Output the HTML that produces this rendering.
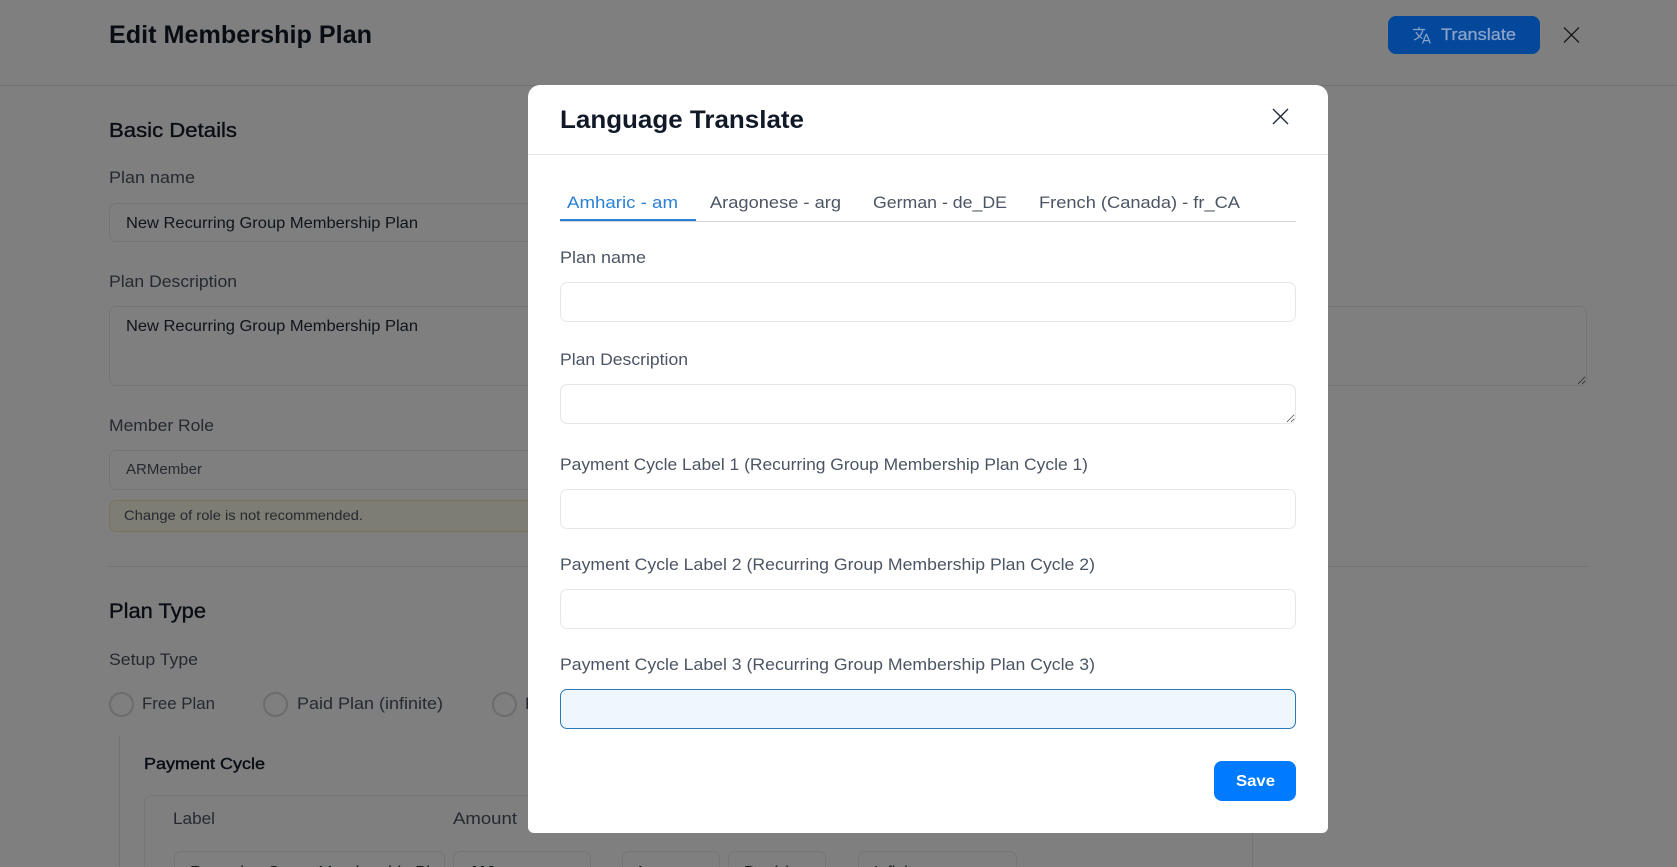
<!DOCTYPE html>
<html lang="en">
<head>
<meta charset="utf-8">
<title>Edit Membership Plan</title>
<style>
html,body{margin:0;padding:0;width:1677px;height:867px;overflow:hidden;background:#fff;font-family:"Liberation Sans",sans-serif}
#page{position:relative;width:1677px;height:867px;overflow:hidden;contain:paint}
.abs,.box,textarea,input{position:absolute;box-sizing:border-box}
.box{border:1px solid #ebebeb;border-radius:7px;background:#fff}
textarea,input{border:1px solid #e5e7eb;border-radius:7px;background:#fff;outline:none;margin:0;padding:0;display:block}
textarea{resize:both}
svg.layer{position:absolute;left:0;top:0;width:1677px;height:867px;pointer-events:none;overflow:hidden}
svg text{font-family:"Liberation Sans",sans-serif}
.radio{position:absolute;box-sizing:border-box;width:25px;height:25px;border:2px solid #d8d8d8;border-radius:50%;background:#fff;top:692px}
#overlay{position:absolute;left:0;top:0;width:1677px;height:867px;background:rgba(0,0,0,.5)}
#modal{position:absolute;left:528px;top:85px;width:800px;height:748px;background:#fff;border-radius:12px 12px 6px 6px}
.btn{position:absolute;border-radius:8px}
.cut{position:absolute;box-sizing:border-box;top:851px;height:16px;border:1px solid #ebebeb;border-bottom:0;border-radius:7px 7px 0 0}
</style>
</head>
<body>
<div id="page">

<!-- underlying page -->
<div class="abs" style="left:0;top:85px;width:1677px;height:1px;background:#e5e7eb"></div>
<div class="box" style="left:109px;top:203px;width:800px;height:39px"></div>
<textarea style="left:109px;top:306px;width:1478px;height:80px;border-color:#ebebeb"></textarea>
<div class="box" style="left:109px;top:450px;width:800px;height:40px"></div>
<div class="box" style="left:109px;top:500px;width:800px;height:32px;background:#fdfbe6;border-color:#f3e8c0"></div>
<div class="abs" style="left:109px;top:566px;width:1478px;height:1px;background:#e5e7eb"></div>
<div class="radio" style="left:109px"></div>
<div class="radio" style="left:263px"></div>
<div class="radio" style="left:492px"></div>
<div class="abs" style="left:119px;top:735px;width:1px;height:132px;background:#e5e7eb"></div>
<div class="abs" style="left:144px;top:795px;width:1109px;height:72px;box-sizing:border-box;border:1px solid #ebebeb;border-bottom:0;border-radius:8px 8px 0 0"></div>
<div class="cut" style="left:174px;width:271px"></div>
<div class="cut" style="left:453px;width:138px"></div>
<div class="cut" style="left:622px;width:98px"></div>
<div class="cut" style="left:728px;width:98px"></div>
<div class="cut" style="left:858px;width:159px"></div>

<svg class="layer" viewBox="0 0 1677 867">
  <text x="109" y="43" font-size="25" font-weight="700" fill="#111827" textLength="263" lengthAdjust="spacingAndGlyphs">Edit Membership Plan</text>
  <text x="109" y="137" font-size="20" fill="#111827" stroke="#111827" stroke-width=".35" textLength="128" lengthAdjust="spacingAndGlyphs">Basic Details</text>
  <text x="109" y="183" font-size="17" fill="#4b5563" textLength="86" lengthAdjust="spacingAndGlyphs">Plan name</text>
  <text x="126" y="228" font-size="16" fill="#1f2937" textLength="292" lengthAdjust="spacingAndGlyphs">New Recurring Group Membership Plan</text>
  <text x="109" y="287" font-size="17" fill="#4b5563" textLength="128" lengthAdjust="spacingAndGlyphs">Plan Description</text>
  <text x="126" y="331" font-size="16" fill="#1f2937" textLength="292" lengthAdjust="spacingAndGlyphs">New Recurring Group Membership Plan</text>
  <text x="109" y="431" font-size="17" fill="#4b5563" textLength="105" lengthAdjust="spacingAndGlyphs">Member Role</text>
  <text x="126" y="474" font-size="15" fill="#4b5563" textLength="76" lengthAdjust="spacingAndGlyphs">ARMember</text>
  <text x="124" y="520" font-size="14" fill="#4b5563" textLength="239" lengthAdjust="spacingAndGlyphs">Change of role is not recommended.</text>
  <text x="109" y="618" font-size="21" fill="#111827" stroke="#111827" stroke-width=".35" textLength="97" lengthAdjust="spacingAndGlyphs">Plan Type</text>
  <text x="109" y="665" font-size="17" fill="#4b5563" textLength="89" lengthAdjust="spacingAndGlyphs">Setup Type</text>
  <text x="142" y="709" font-size="17" fill="#4b5563" textLength="73" lengthAdjust="spacingAndGlyphs">Free Plan</text>
  <text x="297" y="709" font-size="17" fill="#4b5563" textLength="146" lengthAdjust="spacingAndGlyphs">Paid Plan (infinite)</text>
  <text x="525" y="709" font-size="17" fill="#4b5563">P</text>
  <text x="144" y="769" font-size="16" fill="#111827" stroke="#111827" stroke-width=".4" textLength="121" lengthAdjust="spacingAndGlyphs">Payment Cycle</text>
  <text x="173" y="824" font-size="17" fill="#4b5563" textLength="42" lengthAdjust="spacingAndGlyphs">Label</text>
  <text x="453" y="824" font-size="17" fill="#4b5563" textLength="64" lengthAdjust="spacingAndGlyphs">Amount</text>
  <text x="190" y="877" font-size="16" fill="#1f2937" textLength="240" lengthAdjust="spacingAndGlyphs">Recurring Group Membership Pl</text>
  <text x="470" y="877" font-size="16" font-weight="700" fill="#111827">110</text>
  <text x="636" y="877" font-size="16" fill="#1f2937">1</text>
  <text x="744" y="877" font-size="16" fill="#1f2937">Day(s)</text>
  <text x="874" y="877" font-size="16" fill="#1f2937">Infinite</text>
</svg>

<div id="overlay"></div>

<!-- top bar actions -->
<div class="btn" style="left:1388px;top:16px;width:152px;height:38px;background:#03489a"></div>
<svg class="layer" viewBox="0 0 1677 867">
  <g fill="none" stroke="#8ba2c9" stroke-width="1.2">
    <path d="M1413 29.5h12M1419 27v2.5M1423 29.5c-1 4.5-4 8.5-9 10.5M1416 32c1.5 3 3.5 5 6.5 6.5"/>
    <path d="M1422.5 43.5l3.6-9h.6l3.6 9M1423.8 40.6h5.4"/>
  </g>
  <text x="1441" y="40" font-size="17" fill="#8ba2c9" stroke="#8ba2c9" stroke-width=".3" textLength="75" lengthAdjust="spacingAndGlyphs">Translate</text>
  <path d="M1564 27.5l15 15M1579 27.5l-15 15" stroke="#1a1a1a" stroke-width="1.3" fill="none"/>
</svg>

<!-- modal -->
<div id="modal">
  <div class="abs" style="left:0;top:69px;width:800px;height:1px;background:#e5e7eb"></div>
  <div class="abs" style="left:32px;top:136px;width:736px;height:1px;background:#d1d5db"></div>
  <div class="abs" style="left:32px;top:134px;width:136px;height:2px;background:#2b80d5"></div>
  <input type="text" style="left:32px;top:197px;width:736px;height:40px">
  <textarea style="left:32px;top:299px;width:736px;height:40px"></textarea>
  <input type="text" style="left:32px;top:404px;width:736px;height:40px">
  <input type="text" style="left:32px;top:504px;width:736px;height:40px">
  <input type="text" style="left:32px;top:604px;width:736px;height:40px;background:#eff7fe;border-color:#2a7ab5">
  <div class="btn" style="left:686px;top:676px;width:82px;height:40px;background:#007bff"></div>
</div>
<svg class="layer" viewBox="0 0 1677 867">
  <text x="560" y="128" font-size="25" font-weight="700" fill="#111827" textLength="244" lengthAdjust="spacingAndGlyphs">Language Translate</text>
  <path d="M1273 109l15 15M1288 109l-15 15" stroke="#1f2937" stroke-width="1.4" fill="none"/>
  <text x="567" y="208" font-size="17" fill="#2b80d5" textLength="111" lengthAdjust="spacingAndGlyphs">Amharic - am</text>
  <text x="710" y="208" font-size="17" fill="#4b5563" textLength="131" lengthAdjust="spacingAndGlyphs">Aragonese - arg</text>
  <text x="873" y="208" font-size="17" fill="#4b5563" textLength="134" lengthAdjust="spacingAndGlyphs">German - de_DE</text>
  <text x="1039" y="208" font-size="17" fill="#4b5563" textLength="201" lengthAdjust="spacingAndGlyphs">French (Canada) - fr_CA</text>
  <text x="560" y="263" font-size="17" fill="#4b5563" textLength="86" lengthAdjust="spacingAndGlyphs">Plan name</text>
  <text x="560" y="365" font-size="17" fill="#4b5563" textLength="128" lengthAdjust="spacingAndGlyphs">Plan Description</text>
  <text x="560" y="470" font-size="17" fill="#4b5563" textLength="528" lengthAdjust="spacingAndGlyphs">Payment Cycle Label 1 (Recurring Group Membership Plan Cycle 1)</text>
  <text x="560" y="570" font-size="17" fill="#4b5563" textLength="535" lengthAdjust="spacingAndGlyphs">Payment Cycle Label 2 (Recurring Group Membership Plan Cycle 2)</text>
  <text x="560" y="670" font-size="17" fill="#4b5563" textLength="535" lengthAdjust="spacingAndGlyphs">Payment Cycle Label 3 (Recurring Group Membership Plan Cycle 3)</text>
  <text x="1236" y="786" font-size="16" font-weight="700" fill="#ffffff" textLength="39" lengthAdjust="spacingAndGlyphs">Save</text>
</svg>

</div>
</body>
</html>
